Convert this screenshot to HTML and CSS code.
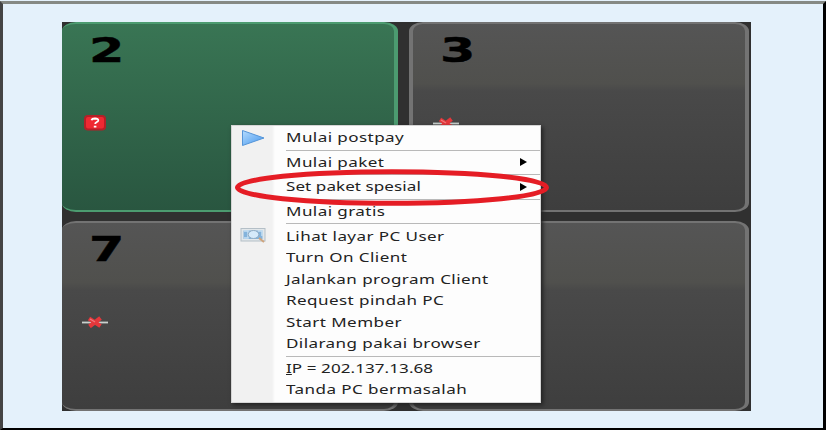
FILE: index.html
```html
<!DOCTYPE html>
<html lang="id">
<head>
<meta charset="utf-8">
<title>Set paket spesial</title>
<link rel="stylesheet" href="styles.css">
</head>
<body>
<main class="frame">
<div class="board">
  <section class="pc active"><b class="number">2</b>
    <svg class="question" width="24" height="16" viewBox="0 0 24 16"><rect x="2" y="1" width="20" height="13.5" rx="3" fill="#ef2932" stroke="#b51f27" stroke-width="2"/><path d="M8.5 5.3Q9 3.5 12 3.5Q15.5 3.6 15.3 5.5Q15.2 6.5 13.5 7.2Q12.2 7.8 12.2 9M10.8 11.6H13.4" fill="none" stroke="#fff" stroke-width="1.8"/></svg>
  </section>
  <section class="pc"><b class="number">3</b>
    <svg class="offline" width="26" height="12" viewBox="0 0 26 12"><path d="M0 6.5H26" stroke="#c9d0cd" stroke-width="1.8"/><path d="M7 2.5L18.5 10M18.5 2L7.5 10.5" stroke="#e5373b" stroke-width="4.2"/><path d="M8 3L13 6" stroke="#f2777a" stroke-width="1.4"/></svg>
  </section>
  <section class="pc"><b class="number">7</b>
    <svg class="offline" width="26" height="12" viewBox="0 0 26 12"><path d="M0 6.5H26" stroke="#c9d0cd" stroke-width="1.8"/><path d="M7 2.5L18.5 10M18.5 2L7.5 10.5" stroke="#e5373b" stroke-width="4.2"/><path d="M8 3L13 6" stroke="#f2777a" stroke-width="1.4"/></svg>
  </section>
  <section class="pc"></section>
</div>
<div class="menu">
  <div class="item"><svg class="icon" width="26" height="18" viewBox="0 0 26 18"><defs><linearGradient id="play" x2="1" y2="1"><stop stop-color="#b5dcff"/><stop offset="1" stop-color="#4496ec"/></linearGradient></defs><path d="M2.5 1.5L24 9L2.5 16.5Z" fill="url(#play)" stroke="#5595d8"/></svg><span>Mulai postpay</span></div>
  <hr>
  <div class="item"><span>Mulai paket</span><svg class="arrow" width="7" height="8"><path d="M0 0L7 4L0 8Z"/></svg></div>
  <hr>
  <div class="item"><span class="tight">Set paket spesial</span><svg class="arrow" width="7" height="8"><path d="M0 0L7 4L0 8Z"/></svg></div>
  <hr>
  <div class="item"><span>Mulai gratis</span></div>
  <hr>
  <div class="item"><svg class="icon" width="26" height="16" viewBox="0 0 26 16"><rect x="1" y="1.5" width="24" height="12.5" fill="#e2e7ea" stroke="#b4bfc7"/><rect x="3.5" y="3.5" width="19" height="8.5" fill="#83b3dc"/><path d="M4 4H8V11H4M18 4H22V9" fill="none" stroke="#c6dff2" stroke-width="1.5"/><ellipse cx="13.5" cy="7.5" rx="5.3" ry="4" fill="#d5eafa" stroke="#91acc3"/><path d="M19 11L24 15" stroke="#cfa57e" stroke-width="2"/></svg><span>Lihat layar PC User</span></div>
  <div class="item"><span>Turn On Client</span></div>
  <div class="item"><span>Jalankan program Client</span></div>
  <div class="item"><span>Request pindah PC</span></div>
  <div class="item"><span>Start Member</span></div>
  <div class="item"><span>Dilarang pakai browser</span></div>
  <hr>
  <div class="item"><span class="tight"><u>I</u>P = 202.137.13.68</span></div>
  <div class="item"><span>Tanda PC bermasalah</span></div>
</div>
<svg class="ring" width="320" height="40" viewBox="0 0 320 40"><ellipse cx="159" cy="19.5" rx="154.5" ry="15.8" fill="none" stroke="#e51d25" stroke-width="5"/></svg>
</main>
</body>
</html>
```

FILE: styles.css
```css
* { box-sizing: border-box; }
body { margin: 0; padding-top: 1px; background: #e4f1fb; }
.frame {
  position: relative;
  width: 826px;
  height: 429px;
  padding: 18px 0 0 59px;
  border-style: solid;
  border-width: 3px 3px 2px;
  border-color: #858984 #000 #000 #444;
  background: #e4f1fb;
}
.board {
  display: grid;
  grid-template-columns: 336px 340px;
  grid-template-rows: 190px 190px;
  gap: 9px 11px;
  width: 689px;
  height: 389px;
  padding-right: 2px;
  background: #303030;
}
.pc {
  display: flex;
  flex-direction: column;
  align-items: flex-start;
  padding: 10px 0 0 27px;
  border: solid #737373;
  border-width: 2px 4px 2px 4px;
  border-radius: 14px / 9px;
  background: linear-gradient(#555 0, #50504d 32%, #494949 36%, #3e3e3e 100%);
}
.pc:nth-child(odd) { border-left-width: 0; }
.pc.active { border-color: #4c9b70; background: linear-gradient(#397554, #295640); }
.number {
  height: 34px;
  font: bold 33px/34px "DejaVu Sans", sans-serif;
  color: #000;
  -webkit-text-stroke: .4px #000;
  transform: scaleX(1.54);
  transform-origin: left;
}
.question { margin: 47px 0 0 -6px; }
.offline { margin: 49px 0 0 -7px; }
.menu {
  position: absolute;
  left: 228px;
  top: 121px;
  width: 310px;
  height: 278px;
  padding: 1px 0;
  border: 1px solid #d5d5d5;
  background: linear-gradient(90deg, #f1f1f1 0 40px, #fdfdfd 43px);
  box-shadow: 2px 2px 4px #222;
}
.item {
  position: relative;
  display: flex;
  align-items: center;
  height: 21.57px;
  padding: 0 13px 0 54px;
  font: 12px/21px "Noto Sans", sans-serif;
  color: #222;
}
.item span {
  white-space: nowrap;
  letter-spacing: .3px;
  transform: scaleX(1.42);
  transform-origin: left;
}
.item .tight { letter-spacing: .05px; }
.icon { position: absolute; left: 8px; top: 2px; }
.arrow { margin-left: auto; fill: #000; }
hr { height: 1px; margin: 1px 0 1px 54px; border: 0; background: #b9b9b9; }
.ring { position: absolute; left: 230px; top: 164px; }
```
